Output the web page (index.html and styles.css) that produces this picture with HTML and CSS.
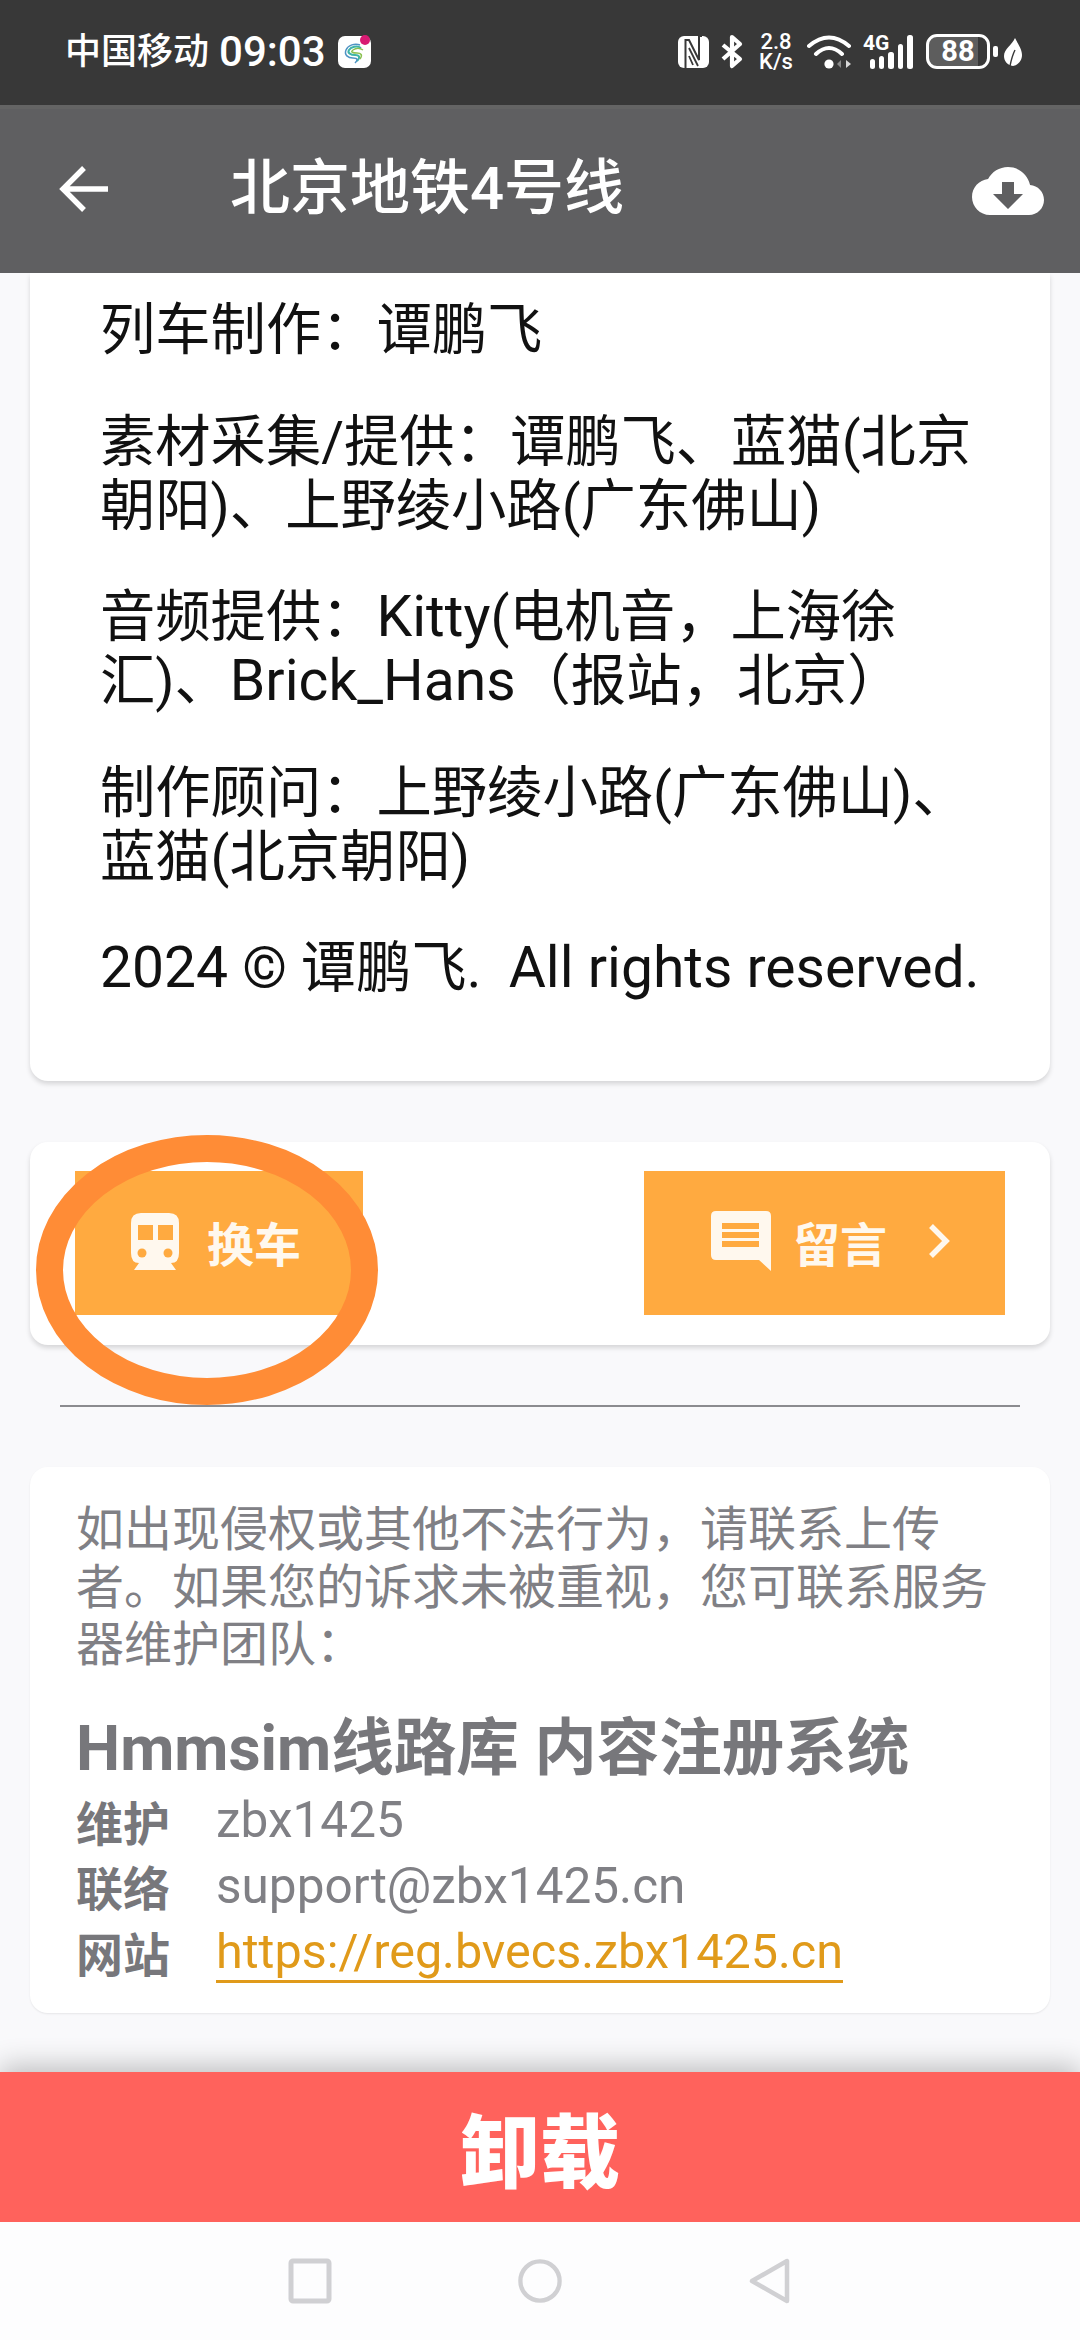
FILE: index.html
```html
<!DOCTYPE html>
<html lang="zh-CN">
<head>
<meta charset="utf-8">
<title>北京地铁4号线</title>
<link rel="stylesheet" href="styles.css">
</head>
<body>
<div class="app">
  <div class="statusbar">
    <div class="status-left">
      <span class="carrier">中国移动</span>
      <span class="clock">09:03</span>
      <svg class="ic-cm" viewBox="0 0 33 33"><rect y="1" width="33" height="32" rx="7" fill="#fff"/><path d="M23 13C19 10 13 12 11 15S13 20 17 20 23 22 19 26" fill="none" stroke="#3fb4a8" stroke-width="2"/><path d="M22 10C17 8 10 10 8 15S10 23 15 23 20 25 17 28" fill="none" stroke="#4f93c4" stroke-width="1.5"/><path d="M25 15C22 13 18 13 15 15S15 18 19 18 25 20 22 24" fill="none" stroke="#8cc152" stroke-width="1.5"/><circle cx="27" cy="5" r="5" fill="#d81b73"/></svg>
    </div>
    <div class="status-right">
      <svg class="ic-nfc" viewBox="0 0 31 32"><rect width="31" height="32" rx="6" fill="#fff"/><path d="M7.5 32V4H11L21 24V0H24" fill="none" stroke="#383838" stroke-width="2"/><path d="M11 12L20 30M11 20L15 29" stroke="#383838" stroke-width="1.8"/></svg>
      <svg class="ic-bt" viewBox="0 0 22 35"><path d="M2 11L19 25 11 32V3L19 10 2 25" fill="none" stroke="#fff" stroke-width="4.2" stroke-linejoin="round"/></svg>
      <div class="speed">2.8<br>K/s</div>
      <svg class="ic-wifi" viewBox="0 0 44 34"><path d="M2 11Q22-6 42 11M9 19Q22 7 35 19" fill="none" stroke="#fff" stroke-width="4" stroke-linecap="round"/><circle cx="22" cy="29" r="4.6" fill="#fff"/><path d="M34 25V33L30 29Z" fill="#8a8a8a"/><path d="M39 25V33L44 29Z" fill="#d8d8d8"/></svg>
      <div class="signal">
        <span class="sig-text">4G</span>
        <svg class="ic-signal" viewBox="0 0 50 34"><rect x="7" y="24" width="5" height="10" rx="2.5" fill="#fff"/><rect x="16" y="21" width="5" height="13" rx="2.5" fill="#fff"/><rect x="25" y="17" width="6" height="17" rx="2.5" fill="#fff"/><rect x="35" y="9" width="5" height="25" rx="2.5" fill="#fff"/><rect x="44" y="0" width="6" height="34" rx="2.5" fill="#fff"/></svg>
      </div>
      <div class="battery"><span class="battery-num">88</span></div>
      <span class="battery-tip"></span>
      <svg class="ic-leaf" viewBox="0 0 18 28"><path d="M11 0C14 6 18 11 18 17 18 23 14 27 9 28 3 27 0 23 0 18 0 11 8 7 11 0Z" fill="#fff"/><path d="M6 28Q8 18 11 12" fill="none" stroke="#383838" stroke-width="1.4"/></svg>
    </div>
  </div>

  <header class="appbar">
    <svg class="ic-back" viewBox="0 0 50 48"><path d="M49 24H5M25 3L4 24 25 45" fill="none" stroke="#fff" stroke-width="5.4"/></svg>
    <h1 class="title">北京地铁4号线</h1>
    <svg class="ic-cloud" viewBox="0 4 24 16"><path fill="#fff" d="M19.35 10.04C18.67 6.59 15.64 4 12 4 9.11 4 6.6 5.64 5.35 8.04 2.34 8.36 0 10.91 0 14c0 3.31 2.69 6 6 6h13c2.76 0 5-2.24 5-5 0-2.64-2.05-4.78-4.65-4.96zM17 13l-5 5-5-5h3V9h4v4h3z"/></svg>
  </header>

  <main class="content">
    <section class="card credits">
      <p>列车制作：谭鹏飞</p>
      <p>素材采集/提供：谭鹏飞、蓝猫(北京<br>朝阳)、上野绫小路(广东佛山)</p>
      <p>音频提供：<span class="lat">Kitty</span>(电机音，上海徐<br>汇)、<span class="lat">Brick_Hans</span>（报站，北京）</p>
      <p>制作顾问：上野绫小路(广东佛山)、<br>蓝猫(北京朝阳)</p>
      <p><span class="lat">2024 ©</span> 谭鹏飞.&nbsp; <span class="lat">All rights reserved.</span></p>
    </section>

    <section class="card actions">
      <a class="btn btn-left">
        <svg class="ic-train" viewBox="0 0 48 57"><path fill="#fff8ee" d="M10 0H38Q48 0 48 10V40Q48 50 40 50L45 57H3L8 50Q0 50 0 40V10Q0 0 10 0Z"/><rect x="7" y="12" width="15" height="15" fill="#ffaa40"/><rect x="27" y="12" width="15" height="15" fill="#ffaa40"/><circle cx="11" cy="40" r="4.5" fill="#ffaa40"/><circle cx="37" cy="40" r="4.5" fill="#ffaa40"/></svg>
        <span>换车</span>
      </a>
      <a class="btn btn-right">
        <svg class="ic-msg" viewBox="0 0 60 60"><path fill="#fff8ee" d="M5 0H55Q60 0 60 5V60L48 49H5Q0 49 0 44V5Q0 0 5 0Z"/><path fill="#ffaa40" d="M11 12H48V18H11ZM11 21H48V27H11ZM11 30H48V36H11Z"/></svg>
        <span>留言</span>
        <svg class="ic-chev" viewBox="0 0 22 36"><path d="M3 3L18 18 3 33" fill="none" stroke="#fff8ee" stroke-width="5.5"/></svg>
      </a>
      <svg class="circle-mark" viewBox="0 0 342 270"><ellipse cx="171" cy="135" rx="157.5" ry="121.5" fill="none" stroke="#ff8c36" stroke-width="27"/></svg>
    </section>

    <hr class="rule">

    <section class="card notice">
      <p class="notice-text">如出现侵权或其他不法行为，请联系上传<br>者。如果您的诉求未被重视，您可联系服务<br>器维护团队：</p>
      <h2 class="notice-title">Hmmsim线路库 内容注册系统</h2>
      <dl class="info">
        <dt>维护</dt><dd>zbx1425</dd>
        <dt>联络</dt><dd>support@zbx1425.cn</dd>
        <dt>网站</dt><dd><a class="link">https://reg.bvecs.zbx1425.cn</a></dd>
      </dl>
    </section>
  </main>

  <div class="uninstall">卸载</div>

  <nav class="navbar">
    <svg class="ic-nav" viewBox="0 0 44 46"><rect x="3" y="3" width="38" height="40" rx="2" fill="none" stroke="#d0d0d3" stroke-width="5"/></svg>
    <svg class="ic-nav" viewBox="0 0 46 46"><ellipse cx="23" cy="23" rx="20.5" ry="20.5" fill="none" stroke="#d0d0d3" stroke-width="4.5"/></svg>
    <svg class="ic-nav" viewBox="0 0 44 46"><path d="M39 3V43L4 23Z" fill="none" stroke="#d0d0d3" stroke-width="4.5" stroke-linejoin="round"/></svg>
  </nav>
</div>
</body>
</html>
```

FILE: styles.css
```css
* { box-sizing: border-box; }
html, body { margin: 0; padding: 0; }
body {
  font-family: Roboto, "Noto Sans CJK SC", sans-serif;
  background: #f9f9fb;
}
.app {
  width: 1080px;
  height: 2340px;
  display: flex;
  flex-direction: column;
  overflow: hidden;
}

/* status bar */
.statusbar {
  height: 105px;
  flex: none;
  background: #383838;
  color: #fff;
  display: flex;
  align-items: center;
  justify-content: space-between;
  padding: 0 58px 2px 65px;
}
.status-left { display: flex; align-items: center; }
.carrier { font-size: 36px; line-height: 42px; font-weight: 500; }
.clock { font-size: 42px; line-height: 42px; font-weight: 500; margin-left: 10px; }
.ic-cm { width: 33px; height: 33px; margin-left: 12px; }
.status-right { display: flex; align-items: center; }
.ic-nfc { width: 31px; height: 32px; }
.ic-bt { width: 22px; height: 35px; margin-left: 12px; }
.speed {
  width: 34px;
  margin-left: 16px;
  text-align: center;
  font-size: 22px;
  line-height: 20px;
  font-weight: 500;
}
.ic-wifi { width: 44px; height: 34px; margin-left: 14px; }
.signal { position: relative; width: 50px; height: 34px; margin-left: 12px; }
.sig-text {
  position: absolute;
  left: 0;
  top: 0;
  font-size: 21px;
  line-height: 16px;
  font-weight: 700;
}
.ic-signal { display: block; width: 50px; height: 34px; }
.battery {
  width: 64px;
  height: 35px;
  margin-left: 13px;
  border: 3px solid #fff;
  border-radius: 11px;
  display: flex;
  align-items: center;
  justify-content: center;
  background: linear-gradient(90deg, #5d5d5d 85%, #383838 85%);
}
.battery-num { font-size: 29px; font-weight: 700; line-height: 29px; }
.battery-tip {
  width: 5px;
  height: 11px;
  margin-left: 3px;
  border-radius: 2px;
  background: #fff;
}
.ic-leaf { width: 18px; height: 28px; margin-left: 6px; }

/* app bar */
.appbar {
  height: 168px;
  flex: none;
  background: #5f5f61;
  border-top: 4px solid #646464;
  display: flex;
  align-items: center;
  padding: 0 36px 4px 59px;
  position: relative;
  z-index: 2;
}
.ic-back { width: 50px; height: 48px; flex: none; }
.title {
  flex: 1;
  margin: 0 0 0 121px;
  font-size: 60px;
  line-height: 80px;
  font-weight: 500;
  color: #fff;
}
.ic-cloud { width: 72px; height: 48px; flex: none; margin-top: 3px; }

/* content */
.content {
  flex: 1;
  min-height: 0;
  overflow: hidden;
  padding: 0 30px;
  display: flex;
  flex-direction: column;
}
.card {
  flex: none;
  background: #fff;
  border-radius: 0 0 18px 18px;
  box-shadow: 0 3px 5px rgba(0, 0, 0, .14);
}
.credits {
  height: 808px;
  padding: 26px 70px 0;
  font-size: 55.3px;
  line-height: 64px;
  color: #111;
  white-space: nowrap;
}
.credits p { margin: 0 0 47.5px; }
.lat { font-size: 57px; line-height: 60px; }

.actions {
  margin-top: 61px;
  height: 203px;
  border-radius: 18px;
  display: flex;
  justify-content: space-between;
  padding: 29px 45px 0;
  position: relative;
}
.btn {
  height: 144px;
  background: #ffaa40;
  color: #fff8ee;
  display: flex;
  align-items: center;
  font-size: 47px;
  font-weight: 700;
  padding-bottom: 4px;
}
.btn-left { width: 288px; padding-left: 56px; }
.btn-right { width: 361px; padding-left: 67px; }
.ic-train { width: 48px; height: 57px; margin-right: 28px; }
.ic-msg { width: 60px; height: 60px; margin-right: 22px; }
.ic-chev { width: 22px; height: 36px; margin-left: 41px; }
.circle-mark {
  position: absolute;
  left: 6px;
  top: -7px;
  width: 342px;
  height: 270px;
}

.rule {
  flex: none;
  width: 960px;
  height: 2px;
  margin: 60px 0 0 30px;
  border: 0;
  background: #8b8b8f;
}
.notice {
  margin-top: 60px;
  height: 546px;
  border-radius: 18px;
  padding: 34px 46px 0;
  color: #808085;
  box-shadow: 0 1px 2px rgba(0, 0, 0, .08);
}
.notice-text {
  margin: 0;
  font-size: 48px;
  line-height: 57.5px;
  white-space: nowrap;
}
.notice-title {
  margin: 37px 0 0;
  font-size: 62.5px;
  line-height: 76px;
  font-weight: 700;
  color: #77777b;
  white-space: nowrap;
}
.info {
  margin: 1px 0 0;
  display: grid;
  grid-template-columns: 140px 1fr;
  grid-auto-rows: 65.5px;
  align-items: center;
  font-size: 49.5px;
}
.info dt { font-weight: 700; font-size: 47px; color: #77777b; }
.info dd { margin: 0; }
.link {
  color: #e09a1a;
  border-bottom: 3px solid #e09a1a;
  font-size: 48.5px;
}

/* bottom */
.uninstall {
  height: 150px;
  flex: none;
  background: #ff625c;
  color: #fff;
  font-size: 80px;
  font-weight: 900;
  display: flex;
  align-items: center;
  justify-content: center;
  padding-bottom: 2px;
  position: relative;
  z-index: 2;
  box-shadow: 0 -6px 26px rgba(0, 0, 0, .24);
}
.navbar {
  height: 118px;
  flex: none;
  background: #fdfdfe;
  display: flex;
  align-items: center;
  justify-content: center;
  gap: 186px;
  position: relative;
  z-index: 3;
}
.ic-nav { width: 44px; height: 46px; }
```
